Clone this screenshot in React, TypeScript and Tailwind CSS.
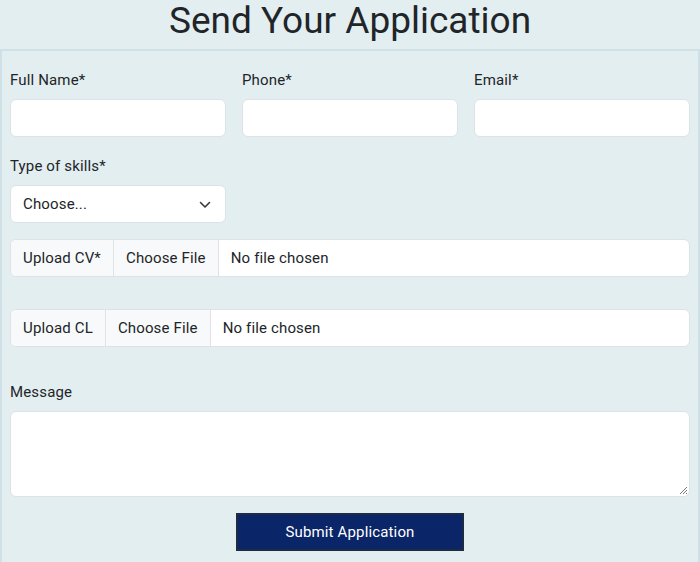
import React from "react";

const font = { fontFamily: "Roboto, 'Noto Sans', sans-serif" };

function Label({ children }: { children: React.ReactNode }) {
  return <div className="h-6 mb-2 text-[15px] leading-[26px] tracking-[0.15px] text-[#212529]">{children}</div>;
}

function Input() {
  return <div className="h-[38px] rounded-[6px] border border-[#dee2e6] bg-white" />;
}

function FileRow({ label }: { label: string }) {
  return (
    <div className="flex h-[38px] rounded-[6px] border border-[#dee2e6] bg-white overflow-hidden text-[15px] tracking-[0.15px] text-[#212529]">
      <div className="flex items-center pt-px px-3 bg-[#f8f9fa] border-r border-[#dee2e6]">{label}</div>
      <div className="flex items-center pt-px px-3 bg-[#f8f9fa] border-r border-[#dee2e6]">Choose File</div>
      <div className="flex items-center pt-px px-3 bg-white">No file chosen</div>
    </div>
  );
}

export default function App() {
  return (
    <div className="w-[700px] h-[562px] overflow-hidden bg-[#e3eef0]" style={font}>
      <h2 className="h-[49px] text-center text-[37px] leading-[42px] text-[#212529]">Send Your Application</h2>
      <div className="border-2 border-[#cfe0e6] px-2 pt-4 pb-4">
        <div className="grid grid-cols-3 gap-4 mb-4">
          <div>
            <Label>Full Name*</Label>
            <Input />
          </div>
          <div>
            <Label>Phone*</Label>
            <Input />
          </div>
          <div>
            <Label>Email*</Label>
            <Input />
          </div>
        </div>
        <div className="grid grid-cols-3 gap-4 mb-4">
          <div>
            <Label>Type of skills*</Label>
            <div className="h-[38px] rounded-[6px] border border-[#dee2e6] bg-white flex items-center justify-between pl-3 pr-[14px] pt-px text-[15px] tracking-[0.15px] text-[#212529]">
              <span>Choose...</span>
              <svg width="12" height="8" viewBox="0 0 12 8" fill="none" stroke="#343a40" strokeWidth="1.6" strokeLinecap="round" strokeLinejoin="round">
                <path d="M1.5 1.5L6 6l4.5-4.5" />
              </svg>
            </div>
          </div>
        </div>
        <div className="mb-8">
          <FileRow label="Upload CV*" />
        </div>
        <div className="mb-8">
          <FileRow label="Upload CL" />
        </div>
        <Label>Message</Label>
        <div className="relative h-[86px] rounded-[6px] border border-[#dee2e6] bg-white mb-4">
          <svg className="absolute right-[1px] bottom-[1px]" width="9" height="9" viewBox="0 0 9 9" stroke="#777" strokeWidth="1">
            <path d="M8 1L1 8M8 4L4 8M8 7L7 8" />
          </svg>
        </div>
        <div className="flex justify-center">
          <button className="w-[228px] h-[38px] bg-[#0a2669] border-2 border-[#1f2a44] text-white text-[15px] tracking-[0.15px] pt-px">Submit Application</button>
        </div>
      </div>
    </div>
  );
}
